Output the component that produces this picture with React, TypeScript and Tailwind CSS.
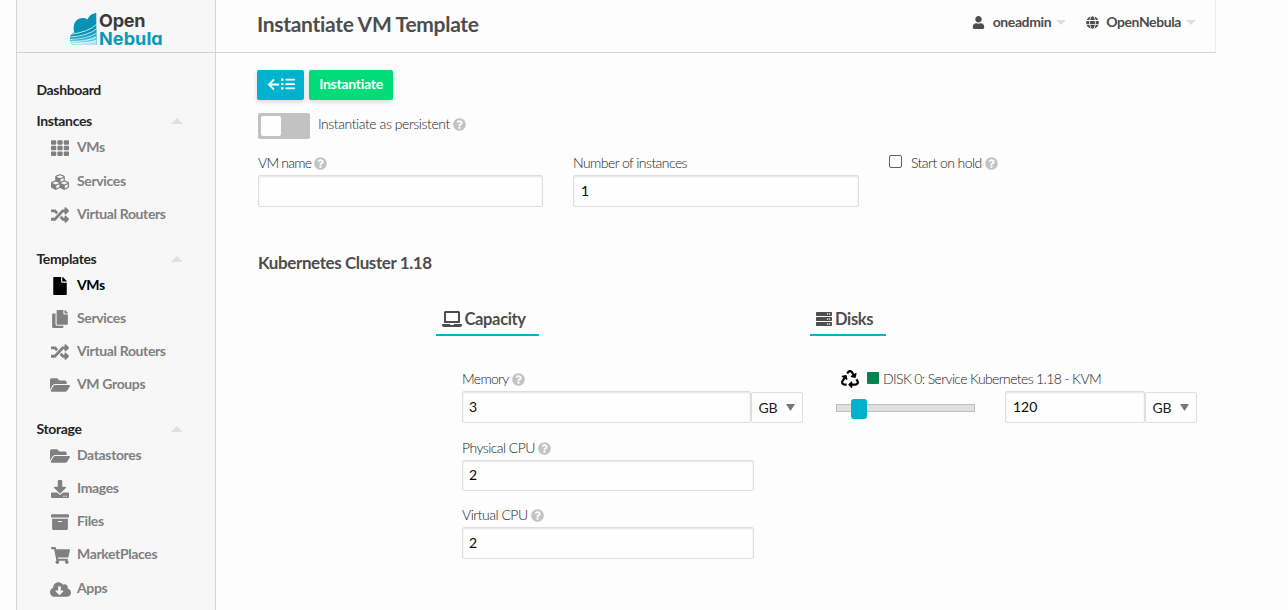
import type { ReactNode } from "react";
import type { IconType } from "react-icons";
import {
  FaTh, FaCubes, FaRandom, FaFile, FaCopy, FaFolderOpen, FaDownload, FaArchive, FaShoppingCart,
  FaCloudDownloadAlt, FaUser, FaGlobe, FaArrowLeft, FaListUl, FaQuestionCircle, FaLaptop, FaServer, FaRecycle,
} from "react-icons/fa";

type Item = { label: string; icon: IconType; size: number; pos: string; active?: boolean };

const groups: { title: string; pad: string; items: Item[] }[] = [
  {
    title: "Instances",
    pad: "h-[138px]",
    items: [
      { label: "VMs", icon: FaTh, size: 18, pos: "h-[34px]" },
      { label: "Services", icon: FaCubes, size: 18, pos: "h-[34px]" },
      { label: "Virtual Routers", icon: FaRandom, size: 18, pos: "h-[32px]" },
    ],
  },
  {
    title: "Templates",
    pad: "h-[170px]",
    items: [
      { label: "VMs", icon: FaFile, size: 18, pos: "h-[34px]", active: true },
      { label: "Services", icon: FaCopy, size: 18, pos: "h-[32px]" },
      { label: "Virtual Routers", icon: FaRandom, size: 18, pos: "h-[34px]" },
      { label: "VM Groups", icon: FaFolderOpen, size: 20, pos: "h-[32px]" },
    ],
  },
  {
    title: "Storage",
    pad: "h-[200px]",
    items: [
      { label: "Datastores", icon: FaFolderOpen, size: 20, pos: "h-[34px]" },
      { label: "Images", icon: FaDownload, size: 18, pos: "h-[32px]" },
      { label: "Files", icon: FaArchive, size: 18, pos: "h-[34px]" },
      { label: "MarketPlaces", icon: FaShoppingCart, size: 19, pos: "h-[32px]" },
      { label: "Apps", icon: FaCloudDownloadAlt, size: 21, pos: "h-[36px]" },
    ],
  },
];

function Logo() {
  return (
    <div className="flex h-[34px] w-[96px]">
      <svg width="27" height="34" viewBox="0 0 27 34" className="shrink-0">
        <defs>
          <clipPath id="cloud">
            <path d="M26.300 1v32H3.500C1 31.500 0 29 0 26c0-3 1.500-4.500 4.200-5.500C2.500 13.500 5 8.500 9 6.800c2.800-1.200 6-.9 8.500.6C19 4 22 1.300 26.300 1z" />
          </clipPath>
        </defs>
        <g clipPath="url(#cloud)">
          <rect width="27" height="34" fill="#0693b7" />
          <path d="M0 34V25q17-1 27-8v17z" fill="#12a3c3" />
          <path d="M0 34v-6q16 1 27-5v11z" fill="#5ccbe0" />
          <path d="M0 34v-4q16 1 27-2v6z" fill="#a9e6f1" />
          <g fill="none" stroke="#f7f7f7" strokeWidth="0.800">
            <path d="M0 22.500Q19 20 27 12" />
            <path d="M0 25Q18 24 27 16.500" />
            <path d="M0 27.500Q17 27 27 21" />
            <path d="M0 29.500Q16 30 27 25" />
            <path d="M0 31.500Q16 32 27 28.500" />
          </g>
        </g>
      </svg>
      <div className="ml-[2px] flex flex-col font-['Inter',sans-serif] font-bold [font-feature-settings:'cv11']">
        <span className="h-[18px] text-[18px] leading-[18px] tracking-[-0.200px] text-[#3c3c3b]">Open</span>
        <span className="h-[18px] text-[18px] leading-[18px] tracking-[0.100px] text-[#0a98b9]">Nebula</span>
      </div>
    </div>
  );
}

function Help() {
  return <FaQuestionCircle className="size-[13px] shrink-0 text-[#c3c3c3]" />;
}

function Label({ children, help, tight }: { children: ReactNode; help?: boolean; tight?: string }) {
  return (
    <div className={"flex h-5 items-center gap-[3px] whitespace-nowrap text-[14px] font-light text-[#1c1c1c] " + (tight ?? "tracking-[-0.560px]")}>
      <span className="pb-[2px]">{children}</span>
      {help && <Help />}
    </div>
  );
}

function Input({ value, size }: { value?: string; size: string }) {
  return (
    <input
      defaultValue={value}
      className={
        "rounded-[2px] border border-[#dedede] bg-[#fefefe] pb-[2px] text-[14px] text-[#0a0a0a] shadow-[inset_0_1px_2px_rgba(10,10,10,0.1)] outline-none " +
        size
      }
    />
  );
}

function Unit() {
  return (
    <div className="mt-px flex h-[31px] w-[52px] items-center rounded-[2px] border border-[#dedede] bg-[#fefefe] pl-[6.500px] text-[14px] tracking-[-0.300px] text-[#222]">
      GB
      <svg width="9" height="7" className="ml-[9px]">
        <path d="M0 0h9L4.500 7z" fill="#777" />
      </svg>
    </div>
  );
}

function Caret({ up }: { up?: boolean }) {
  return (
    <svg width={up ? 12 : 10} height={up ? 6 : 5} viewBox="0 0 12 6" preserveAspectRatio="none">
      <path d={up ? "M0 6h12L6 0z" : "M0 0h12L6 6z"} fill={up ? "#e0e0e0" : "#dedede"} />
    </svg>
  );
}

export default function App() {
  return (
    <div className="h-[610px] w-[1288px] overflow-hidden bg-[#fdfdfd] pl-4 font-['Lato',sans-serif] text-[#4d4d4d]">
      <div className="flex h-full w-[1200px]">
        <aside className="flex w-[200px] shrink-0 flex-col border-x border-[#d5d5d5] bg-[#f7f7f7]">
          <div className="flex h-[53px] shrink-0 justify-start border-b border-[#d0d0d0] pt-3 pl-[53px]">
            <Logo />
          </div>
          <nav className="pt-[27px] pl-[19.500px] text-[14px] font-bold tracking-[-0.360px] text-[#252525]">
            <div className="flex h-[31px] items-start leading-5">Dashboard</div>
            {groups.map((g) => (
              <section key={g.title} className={g.pad}>
                <div className="flex h-[20px] items-center justify-between pr-[32px]">
                  <span className="pb-[2px]">{g.title}</span>
                  <Caret up />
                </div>
                <ul className="-mt-px">
                  {g.items.map((it) => (
                    <li key={it.label} className={"flex items-center " + it.pos + (it.active ? " text-black" : " text-[#808080]")}>
                      <span className="ml-[12.500px] flex w-[22px] justify-center pt-[2px]">
                        <it.icon size={it.size} />
                      </span>
                      <span className="ml-[6px] pb-[2px]">{it.label}</span>
                    </li>
                  ))}
                </ul>
              </section>
            ))}
          </nav>
        </aside>

        <main className="min-w-0 flex-1">
          <header className="flex h-[53px] items-start justify-between border-r border-b border-r-[#ececec] border-b-[#d5d5d5] pr-[19px] pl-[41px]">
            <h1 className="pt-[9px] text-[21px] leading-[30px] font-bold tracking-[-0.300px]">Instantiate VM Template</h1>
            <div className="flex h-11 items-center text-[14px] font-bold tracking-[-0.400px]">
              <FaUser size={13} />
              <span className="mr-[5px] ml-[7.500px] pb-[2px]">oneadmin</span>
              <Caret />
              <FaGlobe size={13} className="ml-[20px]" />
              <span className="mr-[5px] ml-[7px] pb-[2px]">OpenNebula</span>
              <Caret />
            </div>
          </header>

          <div className="pt-[17px] pl-[41px]">
            <div className="flex gap-[5px] text-[14px] font-bold tracking-[-0.260px] text-white">
              <button className="flex h-[30px] w-[47px] items-center justify-center gap-px rounded-[2px] bg-[#00b2cd] pb-[2px] shadow-[0_2px_5px_rgba(0,0,0,0.16)]">
                <FaArrowLeft size={13} />
                <FaListUl size={14} />
              </button>
              <button className="h-[30px] w-[84px] rounded-[2px] bg-[#00dc78] pb-[3px] shadow-[0_2px_5px_rgba(0,0,0,0.16)]">Instantiate</button>
            </div>

            <div className="mt-[13px] flex pl-px">
              <div className="h-[26px] w-[52px] rounded-[2px] bg-[#c2c2c2] p-[3px]">
                <div className="size-5 rounded-[2px] bg-[#fefefe]" />
              </div>
              <div className="ml-2 pt-px"><Label help tight="tracking-[-0.440px]">Instantiate as persistent</Label></div>
            </div>

            <div className="mt-[14px] flex gap-[30px] pl-px">
              <div className="w-[285px]">
                <Label help tight="tracking-[-0.780px]">VM name</Label>
                <Input size="mt-[2px] block h-8 w-[285px] px-[7px]" />
              </div>
              <div className="w-[286px]">
                <Label>Number of instances</Label>
                <Input value="1" size="mt-[2px] block h-8 w-[286px] px-[7px]" />
              </div>
              <div className="flex items-start">
                <div className="mt-[2px] mr-[9px] size-[13px] rounded-[2px] border border-[#606060] bg-white" />
                <Label help>Start on hold</Label>
              </div>
            </div>

            <h2 className="mt-[44px] pl-px text-[17px] leading-6 font-bold tracking-[-0.400px]">Kubernetes Cluster 1.18</h2>

            <div className="mt-[29px] flex">
              <section className="ml-[179px] w-[374px]">
                <h3 className="flex h-[32px] w-[103px] items-center border-b-2 border-[#00b2cd] pl-[6px] text-[16.500px] font-bold tracking-[-0.350px]">
                  <FaLaptop size={20} />
                  <span className="ml-[2.500px] pt-px">Capacity</span>
                </h3>
                <div className="pt-[33px] pl-[26px]">
                  <Label help tight="tracking-[-0.700px]">Memory</Label>
                  <div className="mt-[2px] flex">
                    <Input value="3" size="h-8 w-[289px] px-[6px]" />
                    <Unit />
                  </div>
                  <div className="mt-[15px]"><Label help>Physical CPU</Label></div>
                  <Input value="2" size="mt-[2px] block h-[31px] w-[292px] px-[6px]" />
                  <div className="mt-[14px]"><Label help tight="tracking-[-0.500px]">Virtual CPU</Label></div>
                  <Input value="2" size="mt-[2px] block h-8 w-[292px] px-[6px]" />
                </div>
              </section>

              <section className="w-[387px]">
                <h3 className="flex h-[32px] w-[76px] items-center border-b-2 border-[#00b2cd] pl-[6px] text-[16.500px] font-bold tracking-[-0.350px]">
                  <FaServer size={16} />
                  <span className="ml-[3px] pt-px">Disks</span>
                </h3>
                <div className="pt-[33px] pl-[26px]">
                  <div className="flex items-center pl-[5px]">
                    <FaRecycle size={18} className="text-black" />
                    <span className="mr-[4px] mb-[2px] ml-[8px] size-3 rounded-[1px] bg-[#008552]" />
                    <Label tight="tracking-[-0.630px]">DISK 0: Service Kubernetes 1.18 - KVM</Label>
                  </div>
                  <div className="mt-[2px] flex items-start">
                    <div className="mt-[8px] mr-[30px] flex h-5 w-[139px] items-center">
                      <div className="-mt-[2px] h-2 w-[15px] border border-r-0 border-[#bfbfbf] bg-[#e0e0e0]" />
                      <div className="h-5 w-4 rounded-[3px] bg-[#00b2cd]" />
                      <div className="-mt-[2px] h-2 flex-1 border border-l-0 border-[#bfbfbf] bg-[#e0e0e0]" />
                    </div>
                    <Input value="120" size="h-8 w-[140px] px-[7px]" />
                    <Unit />
                  </div>
                </div>
              </section>
            </div>
          </div>
        </main>
      </div>
    </div>
  );
}
